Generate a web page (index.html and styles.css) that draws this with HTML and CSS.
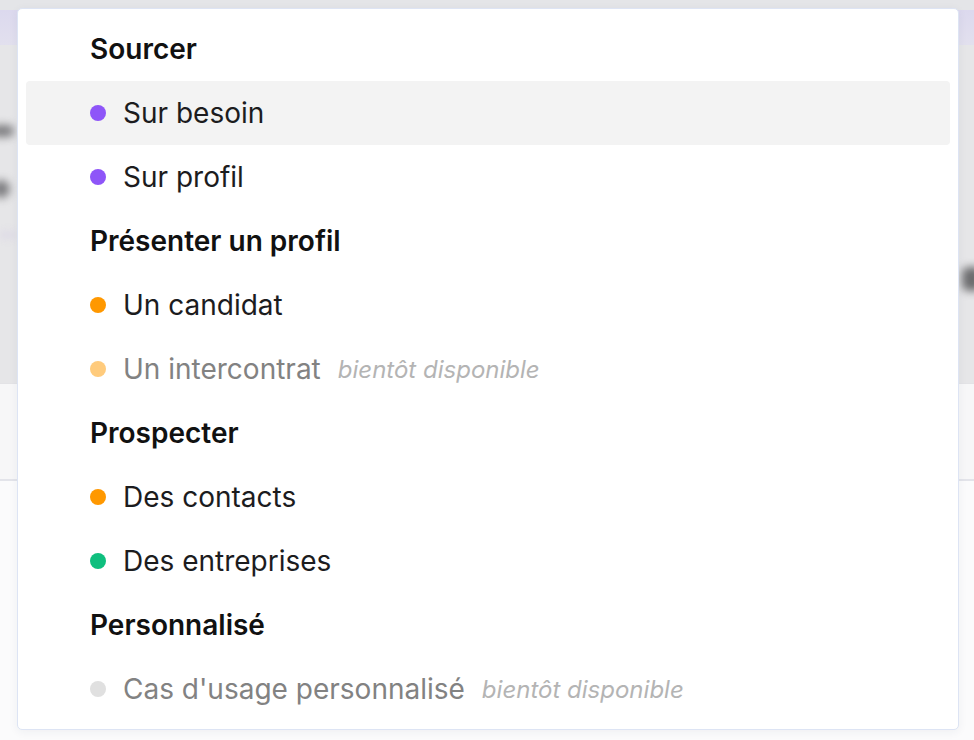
FILE: index.html
```html
<!DOCTYPE html>
<html lang="fr">
<head>
<meta charset="utf-8">
<title>Menu</title>
<link rel="stylesheet" href="styles.css">
</head>
<body>
<div class="backdrop">
  <div class="bd-top"></div>
  <div class="bd-band"></div>
  <div class="bd-main">
    <span class="blob blob-a"></span>
    <span class="blob blob-b"></span>
    <span class="blob blob-c"></span>
    <span class="blob blob-d"></span>
  </div>
  <div class="bd-light"></div>
  <div class="bd-lower"></div>
</div>

<div class="menu">
  <div class="group-title">Sourcer</div>
  <div class="item hover"><span class="dot purple"></span><span class="label">Sur besoin</span></div>
  <div class="item"><span class="dot purple"></span><span class="label">Sur profil</span></div>

  <div class="group-title">Présenter un profil</div>
  <div class="item"><span class="dot orange"></span><span class="label">Un candidat</span></div>
  <div class="item disabled"><span class="dot orange-light"></span><span class="label">Un intercontrat</span><span class="soon">bientôt disponible</span></div>

  <div class="group-title">Prospecter</div>
  <div class="item"><span class="dot orange"></span><span class="label">Des contacts</span></div>
  <div class="item"><span class="dot green"></span><span class="label">Des entreprises</span></div>

  <div class="group-title">Personnalisé</div>
  <div class="item disabled"><span class="dot grey"></span><span class="label">Cas d'usage personnalisé</span><span class="soon">bientôt disponible</span></div>
</div>
</body>
</html>
```
FILE: styles.css
```css
* { box-sizing: border-box; }

html, body {
  margin: 0;
  padding: 0;
  width: 974px;
  height: 740px;
  overflow: hidden;
  background: #fafafb;
  font-family: "Inter", "Noto Sans", sans-serif;
}

.backdrop {
  display: flex;
  flex-direction: column;
  height: 740px;
}

.bd-top { height: 10px; background: #e4e5e8; }
.bd-band { height: 35px; background: linear-gradient(#dcd9ee, #e2e0ee); }
.bd-main {
  position: relative;
  height: 338px;
  background: #e6e6e8;
  overflow: hidden;
}
.bd-light {
  height: 98px;
  background: #f7f7f8;
  border-top: 1px solid #e3e3e6;
  border-bottom: 2px solid #e3e4ea;
}
.bd-lower { flex: 1; background: #fbfbfc; }

.blob {
  position: absolute;
  background: #7d7d80;
  filter: blur(4px);
  border-radius: 6px;
}
.blob-a { left: -10px; top: 80px; width: 24px; height: 12px; }
.blob-b { left: -8px; top: 135px; width: 18px; height: 18px; border-radius: 50%; }
.blob-c { left: 0; top: 188px; width: 16px; height: 4px; background: #d6d0e6; }
.blob-d { left: 962px; top: 222px; width: 20px; height: 24px; background: #6c6c6e; }

.menu {
  position: absolute;
  left: 17px;
  top: 8px;
  width: 942px;
  height: 722px;
  background: #ffffff;
  border: 1px solid #dde4f4;
  border-radius: 5px;
  box-shadow: 0 2px 10px rgba(40, 50, 90, 0.06);
  padding: 8px 8px;
  display: flex;
  flex-direction: column;
}

.group-title {
  height: 64px;
  display: flex;
  align-items: center;
  padding-left: 64px;
  font-size: 28px;
  font-weight: 600;
  color: #111111;
}

.item {
  height: 64px;
  display: flex;
  align-items: center;
  padding-left: 64px;
  font-size: 28px;
  color: #1c1c1e;
  border-radius: 4px;
}
.item.hover { background: #f3f3f3; }

.dot {
  width: 16px;
  height: 16px;
  border-radius: 50%;
  margin-right: 17px;
  flex-shrink: 0;
}
.purple { background: #8e55f8; }
.orange { background: #ff9800; }
.orange-light { background: #ffcb7c; }
.green { background: #0fbf7e; }
.grey { background: #e0e0e0; }

.item.disabled .label { color: #828282; }
.soon {
  margin-left: 17px;
  font-size: 24px;
  font-style: italic;
  color: #b4b4b4;
}
```
